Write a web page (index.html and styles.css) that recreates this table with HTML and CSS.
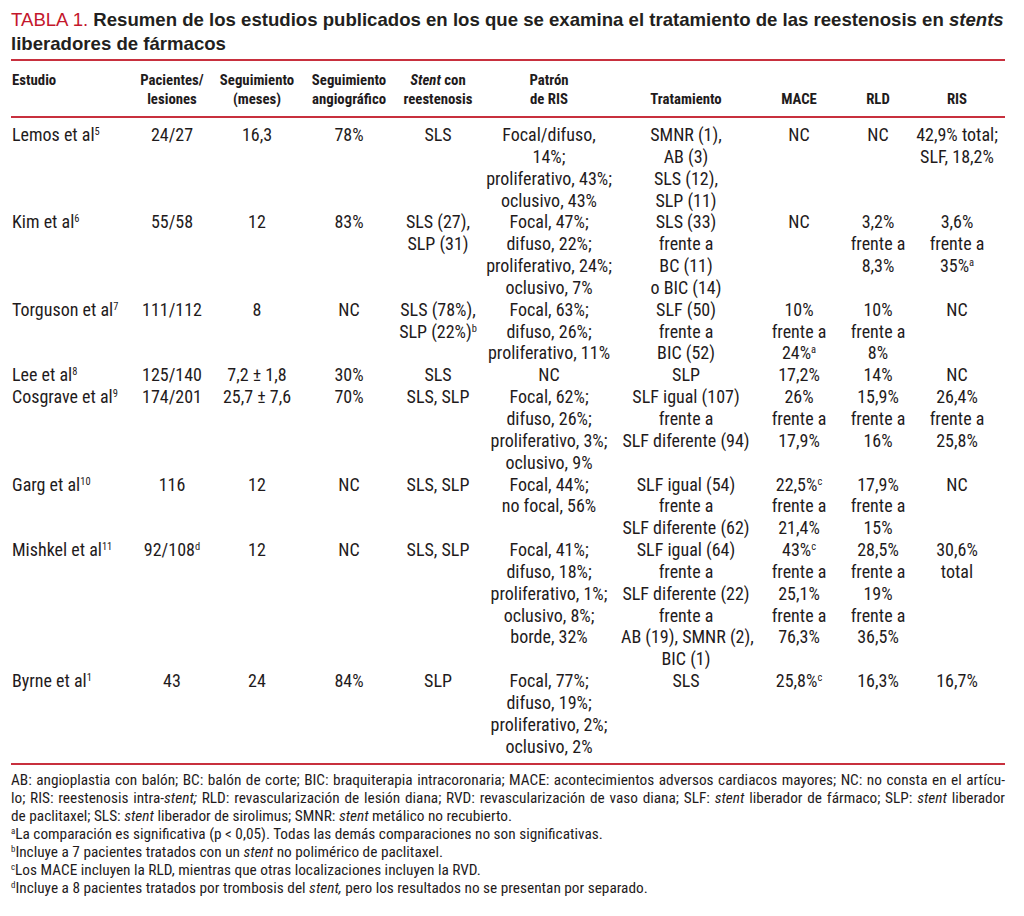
FILE: index.html
```html
<!DOCTYPE html>
<html lang="es">
<head>
<meta charset="utf-8">
<title>Tabla 1</title>
<link rel="stylesheet" href="styles.css">
</head>
<body>
<div class="page">
  <h1 class="title"><span class="label">TABLA 1.</span> Resumen de los estudios publicados en los que se examina el tratamiento de las reestenosis en <i>stents</i> liberadores de fármacos</h1>
  <table class="data">
    <colgroup>
      <col class="c-est"><col class="c-pac"><col class="c-seg"><col class="c-ang"><col class="c-stent"><col class="c-pat"><col class="c-trat"><col class="c-mace"><col class="c-rld"><col class="c-ris">
    </colgroup>
    <thead>
      <tr>
        <th class="left top">Estudio</th>
        <th>Pacientes/<br>lesiones</th>
        <th>Seguimiento<br>(meses)</th>
        <th>Seguimiento<br>angiográfico</th>
        <th class="top"><i>Stent</i> con<br>reestenosis</th>
        <th>Patrón<br>de RIS</th>
        <th>Tratamiento</th>
        <th>MACE</th>
        <th>RLD</th>
        <th>RIS</th>
      </tr>
    </thead>
    <tbody>
      <tr>
        <td class="left">Lemos et al<sup>5</sup></td>
        <td>24/27</td>
        <td>16,3</td>
        <td>78%</td>
        <td>SLS</td>
        <td>Focal/difuso,<br>14%;<br>proliferativo, 43%;<br>oclusivo, 43%</td>
        <td>SMNR (1),<br>AB (3)<br>SLS (12),<br>SLP (11)</td>
        <td>NC</td>
        <td>NC</td>
        <td>42,9% total;<br>SLF, 18,2%</td>
      </tr>
      <tr>
        <td class="left">Kim et al<sup>6</sup></td>
        <td>55/58</td>
        <td>12</td>
        <td>83%</td>
        <td>SLS (27),<br>SLP (31)</td>
        <td>Focal, 47%;<br>difuso, 22%;<br>proliferativo, 24%;<br>oclusivo, 7%</td>
        <td>SLS (33)<br>frente a<br>BC (11)<br>o BIC (14)</td>
        <td>NC</td>
        <td>3,2%<br>frente a<br>8,3%</td>
        <td>3,6%<br>frente a<br>35%<sup>a</sup></td>
      </tr>
      <tr>
        <td class="left">Torguson et al<sup>7</sup></td>
        <td>111/112</td>
        <td>8</td>
        <td>NC</td>
        <td>SLS (78%),<br>SLP (22%)<sup>b</sup></td>
        <td>Focal, 63%;<br>difuso, 26%;<br>proliferativo, 11%</td>
        <td>SLF (50)<br>frente a<br>BIC (52)</td>
        <td>10%<br>frente a<br>24%<sup>a</sup></td>
        <td>10%<br>frente a<br>8%</td>
        <td>NC</td>
      </tr>
      <tr>
        <td class="left">Lee et al<sup>8</sup></td>
        <td>125/140</td>
        <td>7,2 ± 1,8</td>
        <td>30%</td>
        <td>SLS</td>
        <td>NC</td>
        <td>SLP</td>
        <td>17,2%</td>
        <td>14%</td>
        <td>NC</td>
      </tr>
      <tr>
        <td class="left">Cosgrave et al<sup>9</sup></td>
        <td>174/201</td>
        <td>25,7 ± 7,6</td>
        <td>70%</td>
        <td>SLS, SLP</td>
        <td>Focal, 62%;<br>difuso, 26%;<br>proliferativo, 3%;<br>oclusivo, 9%</td>
        <td>SLF igual (107)<br>frente a<br>SLF diferente (94)</td>
        <td>26%<br>frente a<br>17,9%</td>
        <td>15,9%<br>frente a<br>16%</td>
        <td>26,4%<br>frente a<br>25,8%</td>
      </tr>
      <tr>
        <td class="left">Garg et al<sup>10</sup></td>
        <td>116</td>
        <td>12</td>
        <td>NC</td>
        <td>SLS, SLP</td>
        <td>Focal, 44%;<br>no focal, 56%</td>
        <td>SLF igual (54)<br>frente a<br>SLF diferente (62)</td>
        <td>22,5%<sup>c</sup><br>frente a<br>21,4%</td>
        <td>17,9%<br>frente a<br>15%</td>
        <td>NC</td>
      </tr>
      <tr>
        <td class="left">Mishkel et al<sup>11</sup></td>
        <td>92/108<sup>d</sup></td>
        <td>12</td>
        <td>NC</td>
        <td>SLS, SLP</td>
        <td>Focal, 41%;<br>difuso, 18%;<br>proliferativo, 1%;<br>oclusivo, 8%;<br>borde, 32%</td>
        <td>SLF igual (64)<br>frente a<br>SLF diferente (22)<br>frente a<br>AB (19), SMNR (2),<br>BIC (1)</td>
        <td>43%<sup>c</sup><br>frente a<br>25,1%<br>frente a<br>76,3%</td>
        <td>28,5%<br>frente a<br>19%<br>frente a<br>36,5%</td>
        <td>30,6%<br>total</td>
      </tr>
      <tr>
        <td class="left">Byrne et al<sup>1</sup></td>
        <td>43</td>
        <td>24</td>
        <td>84%</td>
        <td>SLP</td>
        <td>Focal, 77%;<br>difuso, 19%;<br>proliferativo, 2%;<br>oclusivo, 2%</td>
        <td>SLS</td>
        <td>25,8%<sup>c</sup></td>
        <td>16,3%</td>
        <td>16,7%</td>
      </tr>
    </tbody>
  </table>
  <div class="notes">
    <p class="abbr">
      <span class="jline">AB: angioplastia con balón; BC: balón de corte; BIC: braquiterapia intracoronaria; MACE: acontecimientos adversos cardiacos mayores; NC: no consta en el artícu-</span>
      <span class="jline">lo; RIS: reestenosis intra-<i>stent;</i> RLD: revascularización de lesión diana; RVD: revascularización de vaso diana; SLF: <i>stent</i> liberador de fármaco; SLP: <i>stent</i> liberador</span>
      <span class="line">de paclitaxel; SLS: <i>stent</i> liberador de sirolimus; SMNR: <i>stent</i> metálico no recubierto.</span>
    </p>
    <p class="note"><sup>a</sup>La comparación es significativa (p &lt; 0,05). Todas las demás comparaciones no son significativas.</p>
    <p class="note"><sup>b</sup>Incluye a 7 pacientes tratados con un <i>stent</i> no polimérico de paclitaxel.</p>
    <p class="note"><sup>c</sup>Los MACE incluyen la RLD, mientras que otras localizaciones incluyen la RVD.</p>
    <p class="note"><sup>d</sup>Incluye a 8 pacientes tratados por trombosis del <i>stent,</i> pero los resultados no se presentan por separado.</p>
  </div>
</div>
</body>
</html>
```

FILE: styles.css
```css
html, body {
  margin: 0;
  padding: 0;
  background: #ffffff;
}

.page {
  padding: 8px 19px 0 11px;
  color: #1f1b1c;
  font-family: "Roboto", "Roboto Condensed", "Liberation Sans", sans-serif;
  font-stretch: condensed;
}

.title {
  margin: 0 0 3px 0;
  font-family: "Liberation Sans", Arial, sans-serif;
  font-stretch: normal;
  font-size: 18.6px;
  line-height: 24px;
  font-weight: bold;
  color: #231f20;
}

.title .label {
  color: #c4172c;
  font-weight: normal;
}

.data {
  width: 994px;
  border-collapse: collapse;
  table-layout: fixed;
  border-top: 2px solid #c8303e;
  border-bottom: 2px solid #c8303e;
}

.c-est { width: 118px; }
.c-pac { width: 86px; }
.c-seg { width: 84px; }
.c-ang { width: 100px; }
.c-stent { width: 78px; }
.c-pat { width: 144px; }
.c-trat { width: 130px; }
.c-mace { width: 96px; }
.c-rld { width: 62px; }
.c-ris { width: 96px; }

.data th {
  font-weight: bold;
  font-size: 14.8px;
  line-height: 19px;
  text-align: center;
  vertical-align: bottom;
  padding: 10px 0 7px 0;
  white-space: nowrap;
  border-bottom: 2px solid #c8303e;
}

.data th.top {
  vertical-align: top;
}

.data th.left,
.data td.left {
  text-align: left;
  padding-left: 1px;
}

.data td {
  font-size: 18px;
  line-height: 21.85px;
  text-align: center;
  vertical-align: top;
  padding: 0;
  white-space: nowrap;
}

.data tbody tr:first-child td {
  padding-top: 6px;
}

.data tbody tr:last-child td {
  padding-bottom: 6px;
}

sup {
  font-size: 0.58em;
  line-height: 0;
  vertical-align: 0.6em;
}

.notes {
  padding-top: 6px;
  font-size: 15.3px;
  line-height: 18px;
}

.notes p {
  margin: 0;
}

.notes .abbr {
  width: 994px;
}

.jline {
  display: block;
  white-space: nowrap;
  word-spacing: -1px;
  text-align: justify;
  text-align-last: justify;
}

.line {
  display: block;
}
```
